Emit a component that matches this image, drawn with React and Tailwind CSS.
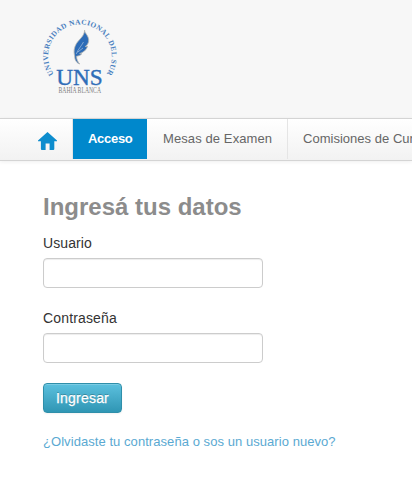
import React from "react";

function Logo() {
  return (
    <svg width="80" height="84" viewBox="0 0 80 84" className="block" role="img" aria-label="UNS">
      <defs>
        <path id="ring" d="M13.7 60.2 A31.8 31.8 0 1 1 66.2 60.2" />
      </defs>
      <text fill="#4a7fc0" fontSize="7.4" fontWeight="bold" fontFamily="'Liberation Serif', serif">
        <textPath href="#ring" textLength="137" lengthAdjust="spacing">UNIVERSIDAD NACIONAL DEL SUR</textPath>
      </text>
      <path
        d="M44.6 16.2 C44.6 19.5 49.4 22 48.6 27.5 C48.3 29.6 46.8 31.4 45.2 32.6 L47.6 32.2 C46.6 36 43 38.6 39.6 39.6 L41.8 39.8 C40 41.8 37.8 42 36.6 42.2 C36.6 45.5 37.8 48 39.8 50 C36 48.8 34.6 45.5 34.7 42 C33.6 38 33.9 33.5 36.6 29.3 C39.6 24.8 44.4 22 44.6 16.2 Z"
        fill="#2d6cb7"
        stroke="#b5b5b0"
        strokeWidth="0.8"
      />
      <path d="M36.2 40 C38 35.5 41 32.5 43.5 28 M37.6 38.2 L43 34" fill="none" stroke="#b8cce4" strokeWidth="0.6" />
      <text x="16.3" y="71" textLength="46.5" lengthAdjust="spacingAndGlyphs" fill="#2f6db8" stroke="#2f6db8" strokeWidth="0.4" fontSize="24" fontFamily="'Liberation Serif', serif">UNS</text>
      <text x="18.5" y="79" textLength="42.5" lengthAdjust="spacingAndGlyphs" fill="#7d7d7d" fontSize="7.2" fontFamily="'Liberation Serif', serif">BAHÍA BLANCA</text>
    </svg>
  );
}

function Field({ label, type, spacing }) {
  return (
    <label className="block">
      <span className={`mb-[5px] block h-5 text-sm leading-5 text-[#333] ${spacing}`}>{label}</span>
      <input
        type={type}
        className="block h-[30px] w-[220px] rounded-[4px] border border-[#ccc] bg-white px-1.5 shadow-[inset_0_1px_1px_rgba(0,0,0,0.075)] outline-none"
      />
    </label>
  );
}

export default function App() {
  return (
    <div className="h-[502px] w-full overflow-hidden bg-white font-['Liberation_Sans',Arial,sans-serif]">
      <header className="h-[118px] bg-[#f7f7f7] pt-[14px] pl-10">
        <Logo />
      </header>
      <nav className="flex h-[43px] items-start overflow-hidden border-y border-[#d4d4d4] bg-linear-to-b from-white to-[#f2f2f2] pl-[22px] text-[13px] leading-5 whitespace-nowrap text-[#666] shadow-[0_1px_4px_rgba(0,0,0,0.065)]">
        <a className="flex h-10 w-[51px] shrink-0 border-r border-[#e5e5e5] pt-[13px] pl-4">
          <svg width="19" height="18" viewBox="0 0 19 18" fill="#0d8dce">
            <path d="M9.5 0 L19 8.5 V9.2 H16.3 V17 Q16.3 18 15.3 18 H11.6 V11.5 H7.6 V18 H3.9 Q2.9 18 2.9 17 V9.2 H0 V8.5 Z" />
          </svg>
        </a>
        <a className="h-10 w-[74px] shrink-0 bg-[#0088cc] py-2.5 pl-[15px] font-bold tracking-[-0.3px] text-white">Acceso</a>
        <a className="h-10 w-[141px] shrink-0 border-r border-[#e5e5e5] py-2.5 pl-4 tracking-[0.1px]">Mesas de Examen</a>
        <a className="h-10 shrink-0 py-2.5 pl-[15px] tracking-[0.02px]">Comisiones de Cursado</a>
      </nav>
      <main className="pt-[26px] pl-[43px]">
        <h1 className="h-10 text-2xl leading-10 font-bold text-[#8c8c8c]">Ingresá tus datos</h1>
        <form className="mt-[6px]">
          <Field label="Usuario" type="text" spacing="tracking-[0.1px]" />
          <div className="h-5" />
          <Field label="Contraseña" type="password" spacing="tracking-[0.15px]" />
          <button
            type="button"
            className="mt-5 block h-[30px] w-[79px] rounded-[4px] border border-[#2f8faa] bg-linear-to-b from-[#5bc0de] to-[#2f96b4] text-sm leading-5 tracking-[0.2px] text-white shadow-[inset_0_1px_0_rgba(255,255,255,0.2),0_1px_2px_rgba(0,0,0,0.05)] [-webkit-text-stroke:0.25px_white] [text-shadow:0_-1px_0_rgba(0,0,0,0.25)]"
          >
            Ingresar
          </button>
        </form>
        <a className="mt-[19px] block text-[13px] leading-5 tracking-[0.06px] text-[#5aa9d2]">¿Olvidaste tu contraseña o sos un usuario nuevo?</a>
      </main>
    </div>
  );
}
